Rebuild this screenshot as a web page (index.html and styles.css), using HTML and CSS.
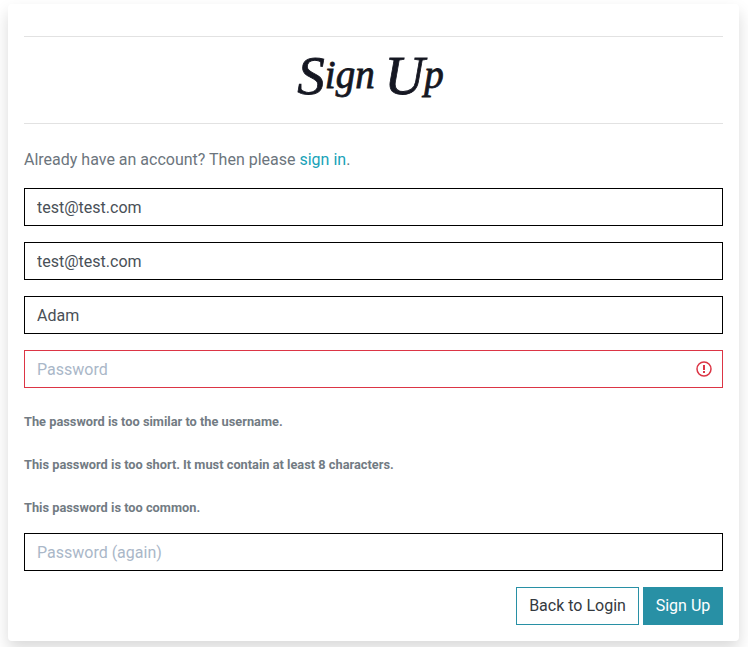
FILE: index.html
```html
<!DOCTYPE html>
<html lang="en">
<head>
<meta charset="utf-8">
<title>Sign Up</title>
<link rel="stylesheet" href="styles.css">
</head>
<body>
<main class="card">
  <hr>
  <h1 class="title"><span class="cap">S</span>ign <span class="cap">U</span>p</h1>
  <hr>
  <p class="intro">Already have an account? Then please <a href="#">sign in</a>.</p>
  <form>
    <input class="field" type="text" value="test@test.com">
    <input class="field" type="text" value="test@test.com">
    <input class="field" type="text" value="Adam">
    <div class="invalid-wrap">
      <input class="field invalid" type="password" placeholder="Password">
      <svg class="alert" viewBox="0 0 16 16" fill="none" stroke="#dc3545">
        <circle cx="8" cy="8" r="7" stroke-width="1.5"/>
        <path d="M8 4v5" stroke-width="2"/>
        <path d="M8 10v2" stroke-width="2"/>
      </svg>
    </div>
    <p class="error">The password is too similar to the username.</p>
    <p class="error">This password is too short. It must contain at least 8 characters.</p>
    <p class="error">This password is too common.</p>
    <input class="field" type="password" placeholder="Password (again)">
    <div class="actions">
      <a class="btn" href="#">Back to Login</a>
      <button class="btn primary" type="button">Sign Up</button>
    </div>
  </form>
</main>
</body>
</html>
```
FILE: styles.css
```css
* { box-sizing: border-box; }
html { overflow: hidden; }
body {
  margin: 0;
  padding: 4px 9px 6px 8px;
  background: #fff;
  color: #6c757d;
  font: 400 16px/24px Roboto, sans-serif;
}
.card {
  height: 637px;
  padding: 32px 16px 16px;
  background: #fff;
  border-radius: 4px;
  box-shadow: 0 8px 16px rgba(0, 0, 0, .15);
}
hr { height: 1px; margin: 0; border: 0; background: #e2e2e2; }
.title {
  height: 86px;
  margin: 0;
  padding-right: 6px;
  overflow: hidden;
  color: #151722;
  font: italic 400 39px/76px "Liberation Serif", cursive;
  text-align: center;
  -webkit-text-stroke: .8px #151722;
}
.cap { font-size: 55px; line-height: 1; vertical-align: -6px; }
.intro { margin: 24px 0 16px; }
.intro a { color: #17a2b8; text-decoration: none; }
.field {
  display: block;
  width: 100%;
  height: 38px;
  margin: 0 0 16px;
  padding: 6px 12px;
  border: 1px solid #000;
  border-radius: 0;
  background: #fff;
  color: #495057;
  font: inherit;
}
.field::placeholder { color: #aab7c8; opacity: 1; }
.invalid-wrap { position: relative; margin-bottom: 22px; }
.field.invalid { margin: 0; border-color: #dc3545; padding-right: 40px; }
.alert { position: absolute; top: 11px; right: 11px; width: 16px; height: 16px; }
.error { margin: 0 0 19px; color: #727b83; font-size: 12.8px; font-weight: 700; }
.error + .field { margin-top: -6px; }
.actions { display: flex; justify-content: flex-end; gap: 4px; }
.btn {
  width: 123px;
  height: 38px;
  padding: 6px 0;
  border: 1px solid #2890a5;
  background: #fff;
  color: #343a40;
  font: inherit;
  text-align: center;
  text-decoration: none;
}
.btn.primary { width: 80px; background: #2890a5; color: #fff; }
```
